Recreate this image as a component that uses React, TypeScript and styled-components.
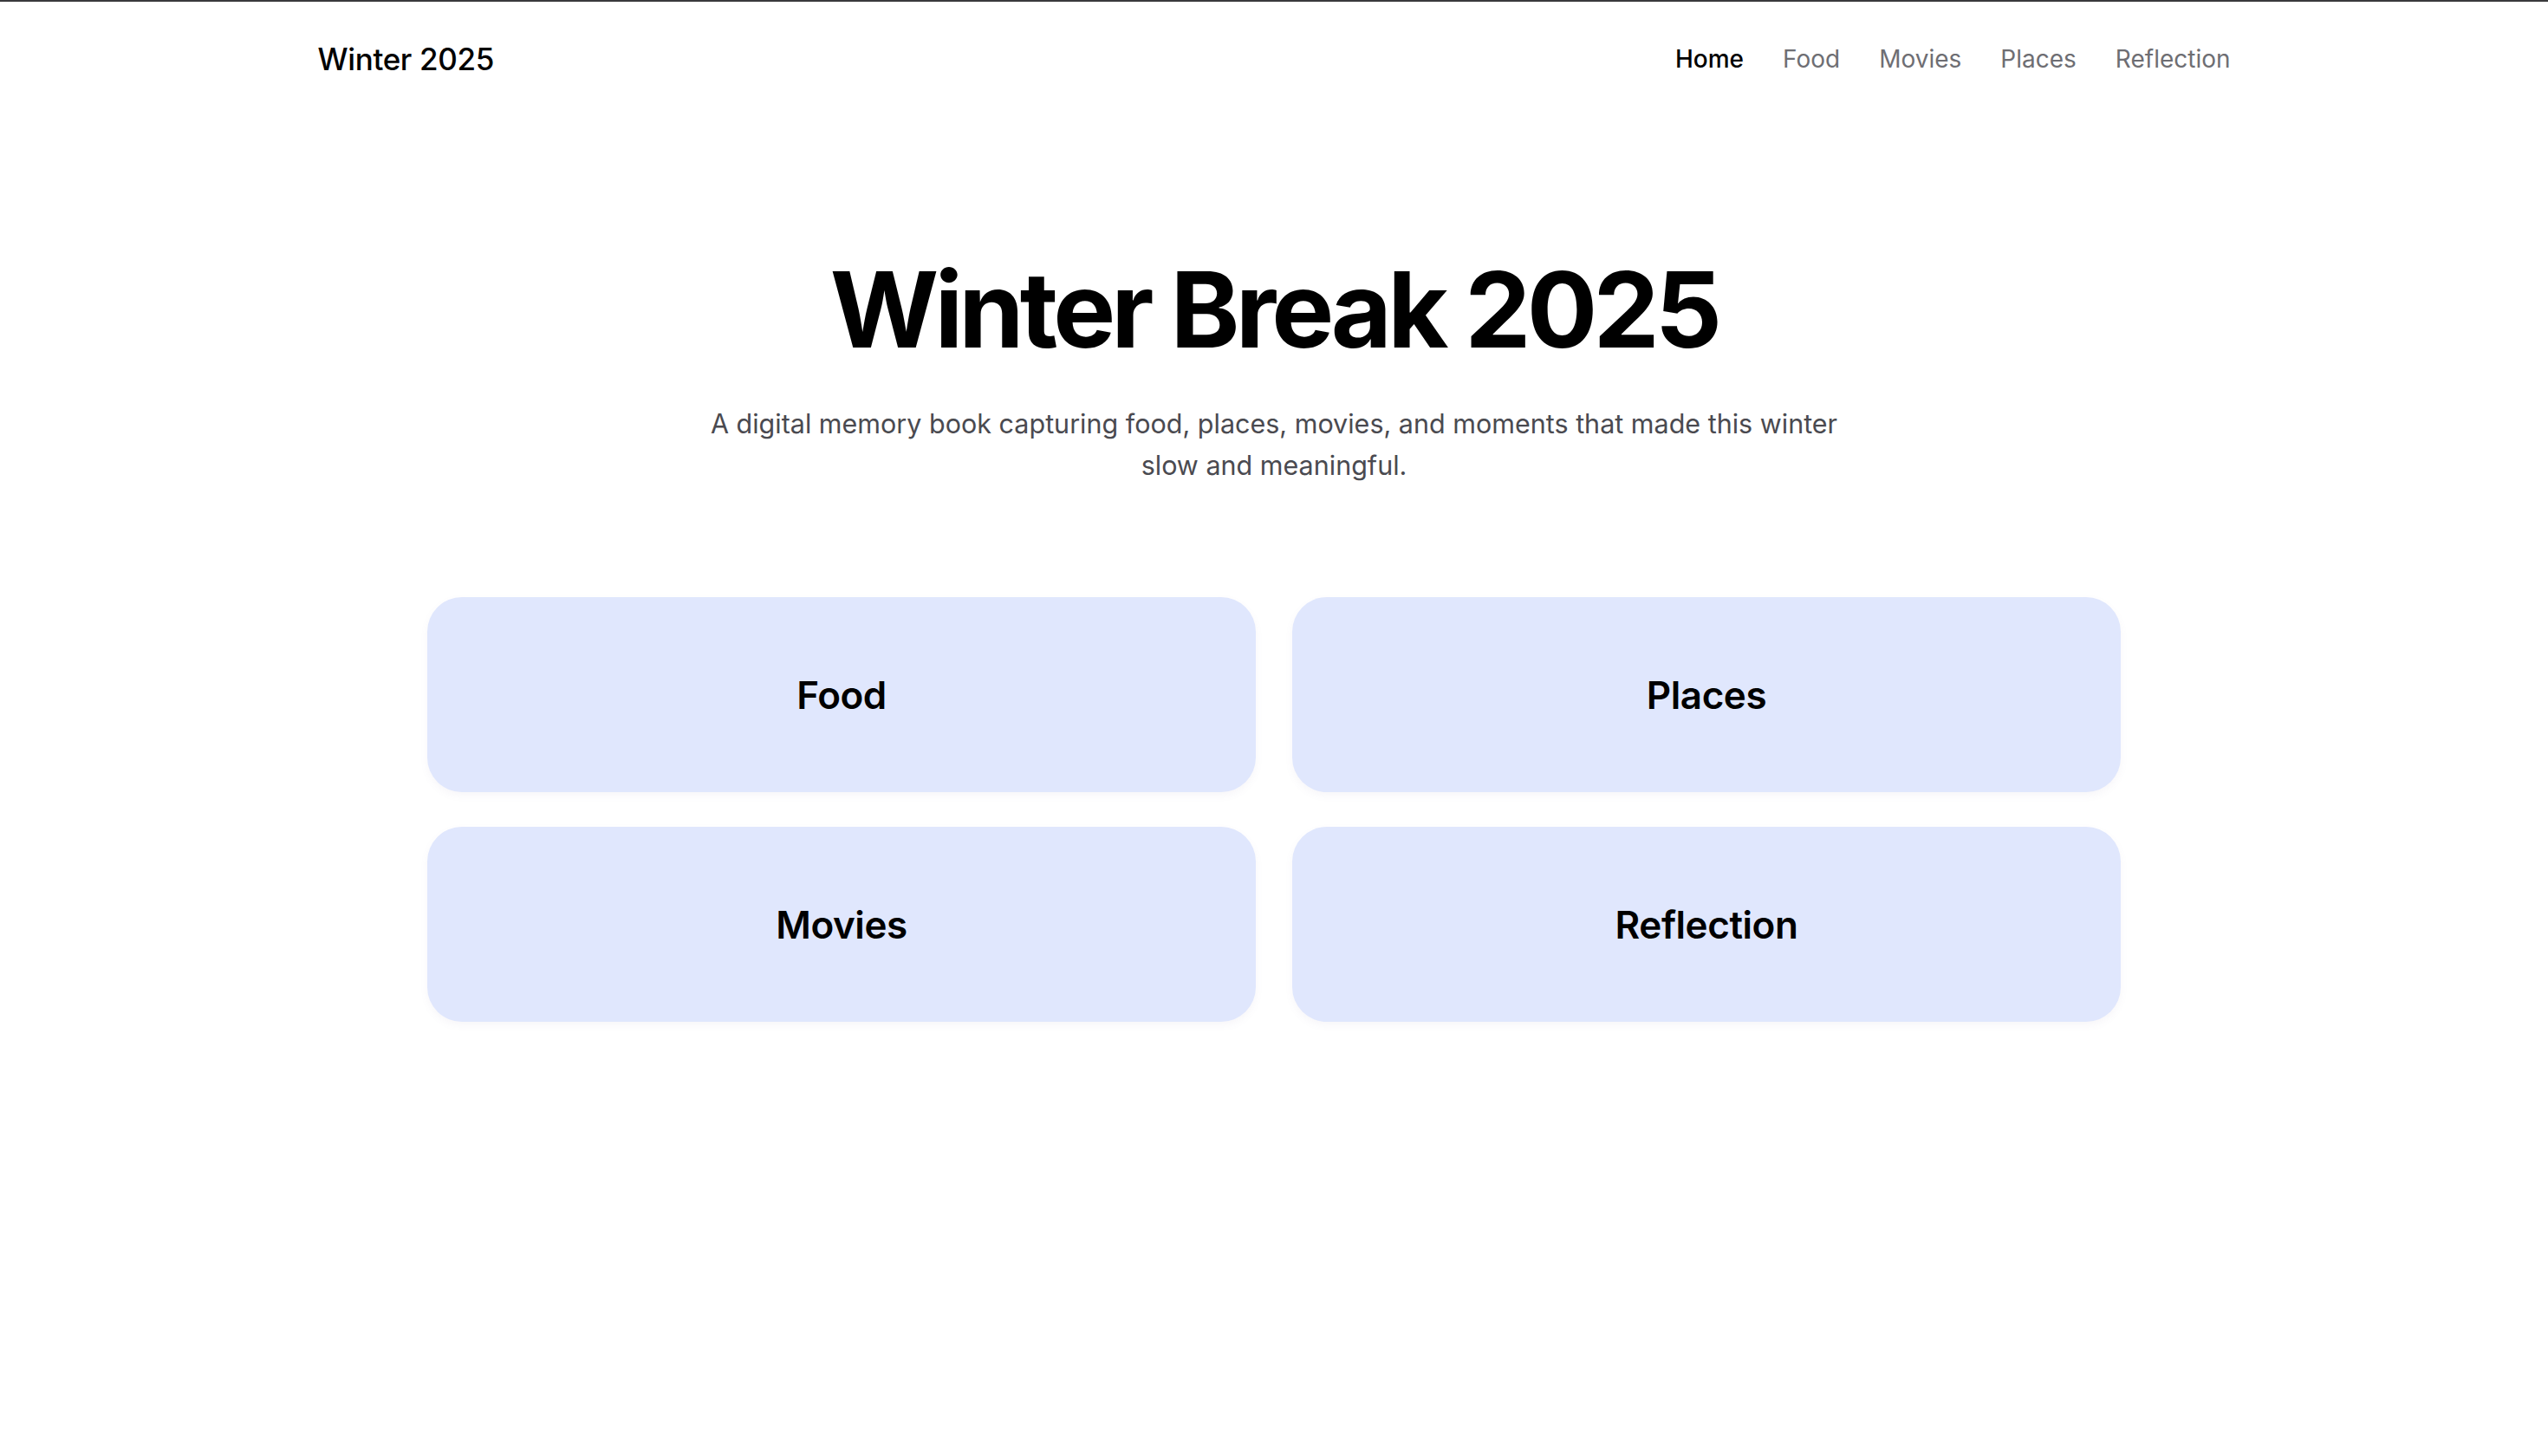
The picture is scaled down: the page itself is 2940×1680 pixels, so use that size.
import React from 'react';
import styled, { createGlobalStyle } from 'styled-components';

const GlobalStyle = createGlobalStyle`
  html, body {
    margin: 0;
    padding: 0;
    background: #ffffff;
  }
  body {
    border-top: 2px solid #3a3a3c;
    font-family: Inter, 'Noto Sans', 'Liberation Sans', sans-serif;
    color: #0a0a0a;
    -webkit-font-smoothing: antialiased;
  }
`;

const Page = styled.div`
  min-height: 1678px;
`;

const Header = styled.header`
  display: flex;
  align-items: center;
  justify-content: space-between;
  height: 132px;
  max-width: 2207px;
  margin: 0 auto;
`;

const Logo = styled.div`
  font-size: 35px;
  font-weight: 500;
  letter-spacing: -0.01em;
  color: #000;
`;

const Nav = styled.nav`
  display: flex;
  align-items: center;
  gap: 45px;
`;

const NavLink = styled.a<{ $active?: boolean }>`
  font-size: 28px;
  font-weight: ${p => (p.$active ? 500 : 400)};
  color: ${p => (p.$active ? '#000' : '#6e6e73')};
  text-decoration: none;
  cursor: pointer;
`;

const Hero = styled.section`
  display: flex;
  flex-direction: column;
  align-items: center;
  text-align: center;
  padding-top: 157px;
`;

const Title = styled.h1`
  margin: 0;
  font-size: 121px;
  line-height: 1.1;
  font-weight: 700;
  letter-spacing: -0.04em;
  color: #000;
`;

const Subtitle = styled.p`
  margin: 41px 0 0;
  max-width: 1340px;
  font-size: 30.5px;
  line-height: 48px;
  color: #4a4a50;
`;

const Grid = styled.div`
  display: grid;
  grid-template-columns: repeat(2, 956px);
  gap: 40px 42px;
  justify-content: center;
  margin-top: 128px;
`;

const Card = styled.a`
  display: flex;
  align-items: center;
  justify-content: center;
  height: 225px;
  border-radius: 40px;
  background: #e0e7fd;
  box-shadow: 0 4px 10px rgba(120, 100, 160, 0.06);
  font-size: 44px;
  font-weight: 600;
  letter-spacing: -0.01em;
  color: #000;
  text-decoration: none;
  cursor: pointer;
`;

const links = ['Food', 'Movies', 'Places', 'Reflection'];
const sections = ['Food', 'Places', 'Movies', 'Reflection'];

export default function App() {
  return (
    <Page>
      <GlobalStyle />
      <Header>
        <Logo>Winter 2025</Logo>
        <Nav>
          <NavLink $active>Home</NavLink>
          {links.map(l => (
            <NavLink key={l}>{l}</NavLink>
          ))}
        </Nav>
      </Header>
      <Hero>
        <Title>Winter Break 2025</Title>
        <Subtitle>
          A digital memory book capturing food, places, movies, and moments that made this winter slow and
          meaningful.
        </Subtitle>
      </Hero>
      <Grid>
        {sections.map(s => (
          <Card key={s}>{s}</Card>
        ))}
      </Grid>
    </Page>
  );
}
